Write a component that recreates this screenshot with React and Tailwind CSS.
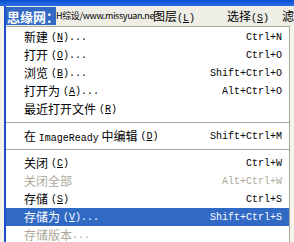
const cjk = { fontFamily: '"Noto Sans CJK SC", sans-serif' };

const groups = [
  [
    { t: '新建', k: 'N', tail: '...', sc: 'Ctrl+N' },
    { t: '打开', k: 'O', tail: '...', sc: 'Ctrl+O' },
    { t: '浏览', k: 'B', tail: '...', sc: 'Shift+Ctrl+O' },
    { t: '打开为', k: 'A', tail: '...', sc: 'Alt+Ctrl+O' },
    { t: '最近打开文件', k: 'R', tail: '', sc: '' },
  ],
  [{ t: '在 ImageReady 中编辑', k: 'D', tail: '', sc: 'Shift+Ctrl+M' }],
  [
    { t: '关闭', k: 'C', tail: '', sc: 'Ctrl+W' },
    { t: '关闭全部', k: '', tail: '', sc: 'Alt+Ctrl+W', off: true },
    { t: '存储', k: 'S', tail: '', sc: 'Ctrl+S' },
    { t: '存储为', k: 'V', tail: '...', sc: 'Shift+Ctrl+S', on: true },
    { t: '存储版本', k: '', tail: '...', sc: '', off: true },
  ],
];

function Mono({ children, className = '' }) {
  return <span className={`font-['Liberation_Mono',monospace] text-[10px] ${className}`}>{children}</span>;
}

function Label({ t }) {
  // ascii bits in a narrow mono face, cjk in Noto
  const parts = t.split(/([A-Za-z]+)/);
  return (
    <span className="text-[12px]" style={cjk}>
      {parts.map((p, i) => (/^[A-Za-z]+$/.test(p) ? <Mono key={i}>{p}</Mono> : <span key={i}>{p}</span>))}
    </span>
  );
}

function Item({ t, k, tail, sc, off, on }) {
  const color = on ? 'bg-[#316ac5] text-white' : off ? 'text-[#aca899]' : 'text-black';
  return (
    <div className={`flex items-center h-[18px] pl-[18px] pr-[7px] ${color}`}>
      <Label t={t} />
      {k && (
        <Mono className="ml-[3px]">
          (<span className="underline">{k}</span>)
        </Mono>
      )}
      {tail && <Mono>{tail}</Mono>}
      <div className="flex-1" />
      <Mono>{sc}</Mono>
    </div>
  );
}

export default function App() {
  return (
    <div className="w-[294px] h-[242px] overflow-hidden bg-white flex flex-col">
      <div className="h-[6px] shrink-0 bg-gradient-to-b from-[#0a4fd0] to-[#2a6fe6]" />
      <div className="flex flex-1">
        <div className="w-[5px] bg-[#f4f3ee]" />
        <div className="w-[2px] bg-[#1a4fc8]" />
        <div className="flex-1 flex flex-col">
          <div className="h-[20px] shrink-0 flex items-center bg-[#eeede6] whitespace-nowrap">
            <div className="h-[18px] w-[50px] shrink-0 flex items-center pl-[1px] bg-[#316ac5] text-white font-bold text-[13px] leading-none" style={cjk}>
              思缘网：
            </div>
            <span className="text-[9px] text-black tracking-[-0.35px] w-[97px] shrink-0" style={cjk}>
              H综设/www.missyuan.ne
            </span>
            <span className="text-[12px] text-black w-[74px] shrink-0" style={cjk}>
              图层<Mono>(<span className="underline">L</span>)</Mono>
            </span>
            <span className="text-[12px] text-black w-[55px] shrink-0" style={cjk}>
              选择<Mono>(<span className="underline">S</span>)</Mono>
            </span>
            <span className="text-[12px] text-black" style={cjk}>滤</span>
          </div>
          <div className="flex">
            <div className="w-[284px] shrink-0 border-t border-r border-[#aca899] bg-white pt-[1px]">
              {groups.map((g, gi) => (
                <div key={gi}>
                  {gi > 0 && (
                    <div className="h-[9px] flex items-center">
                      <div className="flex-1 h-px bg-[#aca899]" />
                    </div>
                  )}
                  {g.map((it) => (
                    <Item key={it.t} {...it} />
                  ))}
                </div>
              ))}
            </div>
            <div className="flex-1 bg-[#f4f3ee]" />
          </div>
        </div>
      </div>
    </div>
  );
}
